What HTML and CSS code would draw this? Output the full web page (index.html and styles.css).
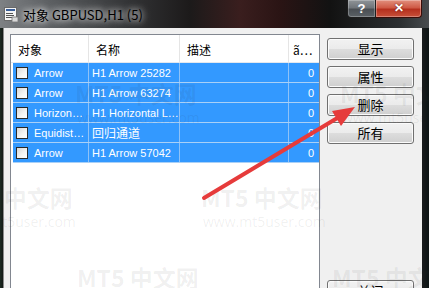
FILE: index.html
```html
<!DOCTYPE html>
<html>
<head>
    <link rel="stylesheet" href="styles.css">
</head>
<body>
    <div class="dlg-window">
        <div class="dlg-titlebar">
            <svg class="dlg-icon" width="15" height="15" viewBox="0 0 15 15">
                <rect x="0.5" y="0.5" width="12" height="13" fill="#f4f4f4" stroke="#6a6a6a"/>
                <rect x="2" y="2" width="9" height="2" fill="#3a5f9a"/>
                <rect x="2" y="6" width="7" height="1" fill="#555"/>
                <rect x="2" y="8" width="8" height="1" fill="#555"/>
                <rect x="2" y="10" width="6" height="1" fill="#555"/>
                <rect x="8" y="10" width="6" height="5" fill="#d8d8d8" stroke="#777" stroke-width="0.8"/>
            </svg>
            <span class="dlg-title">对象 GBPUSD,H1 (5)</span>
            <div class="dlg-caption-btns">
                <div class="dlg-help-btn">?</div>
                <div class="dlg-close-btn">✕</div>
            </div>
        </div>

        <div class="dlg-client">
            <div class="obj-list">
                <div class="obj-header">
                    <div class="obj-hcell">对象</div>
                    <div class="obj-hcell">名称</div>
                    <div class="obj-hcell">描述</div>
                    <div class="obj-hcell">ã…</div>
                </div>
                <div class="obj-row">
                    <div class="obj-cell"><span class="obj-check"></span>Arrow</div>
                    <div class="obj-cell">H1 Arrow 25282</div>
                    <div class="obj-cell"></div>
                    <div class="obj-cell obj-num">0</div>
                </div>
                <div class="obj-row">
                    <div class="obj-cell"><span class="obj-check"></span>Arrow</div>
                    <div class="obj-cell">H1 Arrow 63274</div>
                    <div class="obj-cell"></div>
                    <div class="obj-cell obj-num">0</div>
                </div>
                <div class="obj-row">
                    <div class="obj-cell"><span class="obj-check"></span>Horizon…</div>
                    <div class="obj-cell">H1 Horizontal L…</div>
                    <div class="obj-cell"></div>
                    <div class="obj-cell obj-num">0</div>
                </div>
                <div class="obj-row">
                    <div class="obj-cell"><span class="obj-check"></span>Equidist…</div>
                    <div class="obj-cell obj-cjk">回归通道</div>
                    <div class="obj-cell"></div>
                    <div class="obj-cell obj-num">0</div>
                </div>
                <div class="obj-row">
                    <div class="obj-cell"><span class="obj-check"></span>Arrow</div>
                    <div class="obj-cell">H1 Arrow 57042</div>
                    <div class="obj-cell"></div>
                    <div class="obj-cell obj-num">0</div>
                </div>
            </div>

            <div class="dlg-buttons">
                <button class="dlg-btn">显示</button>
                <button class="dlg-btn">属性</button>
                <button class="dlg-btn">删除</button>
                <button class="dlg-btn">所有</button>
                <button class="dlg-btn dlg-btn-close">关闭</button>
            </div>
        </div>

        <!-- watermarks -->
        <div class="wm wm-a"><div class="wm-big">MT5 中文网</div><div class="wm-small">www.mt5user.com</div></div>
        <div class="wm wm-b"><div class="wm-big">MT5 中文网</div><div class="wm-small">www.mt5user.com</div></div>
        <div class="wm wm-c"><div class="wm-big">MT5 中文网</div><div class="wm-small">www.mt5user.com</div></div>
        <div class="wm wm-d"><div class="wm-big">MT5 中文网</div><div class="wm-small">www.mt5user.com</div></div>
        <div class="wm wm-e"><div class="wm-big">MT5 中文网</div></div>
        <div class="wm wm-f"><div class="wm-big">MT5 中文网</div></div>

        <!-- red annotation arrow -->
        <svg class="annot-arrow" width="429" height="288" viewBox="0 0 429 288">
            <line x1="204" y1="198" x2="339" y2="117" stroke="#e63b3b" stroke-width="4" stroke-linecap="round"/>
            <polygon points="355,107 341,126 332,111" fill="#e63b3b"/>
        </svg>
    </div>
</body>
</html>
```

FILE: styles.css
```css
* {
    margin: 0;
    padding: 0;
    box-sizing: border-box;
}

body {
    width: 429px;
    height: 288px;
    overflow: hidden;
    background: #101412;
    font-family: "Liberation Sans", Arial, sans-serif;
}

.dlg-window {
    position: relative;
    width: 429px;
    height: 288px;
    overflow: hidden;
    background: linear-gradient(90deg, #1c2a22 0, #141a16 3px, #1a1c1e 422px, #0c1414 429px);
}

.dlg-titlebar {
    height: 28px;
    display: flex;
    align-items: center;
    padding-left: 4px;
    background: linear-gradient(90deg, #7e8184 0, #5c5f62 50px, #323335 130px, #1c1a1a 190px, #3a1e1e 240px, #2a1414 280px, #121212 330px, #2c2f31 400px, #474b4e 429px);
    position: relative;
}

.dlg-icon {
    margin-right: 4px;
    margin-top: 1px;
}

.dlg-title {
    font-family: "Noto Sans CJK SC", "Liberation Sans", sans-serif;
    font-size: 13px;
    color: #000;
    text-shadow: 0 0 6px #fff, 0 0 10px rgba(255, 255, 255, 0.8);
    margin-top: 1px;
}

.dlg-caption-btns {
    display: flex;
    align-self: flex-start;
    margin-left: auto;
    margin-right: 7px;
}

.dlg-help-btn {
    width: 29px;
    height: 18px;
    border: 1px solid #1e1e1e;
    border-top: none;
    border-radius: 0 0 0 4px;
    background: linear-gradient(#8f9498 0, #70757a 45%, #4a4f54 55%, #5b6166 100%);
    box-shadow: inset 0 0 0 1px rgba(255, 255, 255, 0.25);
    color: #fff;
    font-weight: bold;
    font-size: 13px;
    text-align: center;
    line-height: 17px;
}

.dlg-close-btn {
    width: 46px;
    height: 18px;
    border: 1px solid #3a0c08;
    border-left: none;
    border-top: none;
    border-radius: 0 0 4px 0;
    background: linear-gradient(#e2907e 0, #cf5a46 45%, #b5301e 55%, #c8503a 100%);
    box-shadow: inset 0 0 0 1px rgba(255, 255, 255, 0.3);
    color: #fff;
    font-weight: bold;
    font-size: 12px;
    text-align: center;
    line-height: 17px;
    text-shadow: 0 0 2px #5a1008;
}

.dlg-client {
    display: flex;
    gap: 7px;
    height: 280px;
    margin: 0 7px 0 3px;
    padding: 6px 8px 6px 6px;
    border-left: 1px solid #8c8c8c;
    background: #f0f0f0;
}

.obj-list {
    width: 310px;
    border: 1px solid #828790;
    background: #fff;
    font-size: 11px;
}

.obj-header {
    display: grid;
    grid-template-columns: 78px 91px 109px 30px;
    height: 28px;
    border-bottom: 1px solid #e4e8ee;
}

.obj-hcell {
    display: flex;
    align-items: center;
    padding: 2px 0 0 7px;
    border-right: 1px solid #e5e5e5;
    font-family: "Noto Sans CJK SC", sans-serif;
    font-size: 12px;
    color: #000;
    white-space: nowrap;
    overflow: hidden;
}

.obj-hcell:last-child {
    border-right: none;
    padding-left: 4px;
}

.obj-row {
    display: grid;
    grid-template-columns: 76px 91px 109px 30px;
    height: 20px;
    margin-left: 2px;
    background: #3399ff;
    border-bottom: 1px solid #a9d0f7;
    color: #fff;
}

.obj-cell {
    display: flex;
    align-items: center;
    padding-left: 3px;
    border-right: 1px solid #8fc2f7;
    white-space: nowrap;
    overflow: hidden;
}

.obj-cell:last-child {
    border-right: none;
}

.obj-check {
    width: 12px;
    height: 12px;
    margin-right: 6px;
    border: 1px solid #2a2a2a;
    background: linear-gradient(135deg, #d6d6d6 0, #f4f4f4 60%, #fff 100%);
    flex-shrink: 0;
}

.obj-cjk {
    font-family: "Noto Sans CJK SC", sans-serif;
    font-size: 12px;
}

.obj-num {
    justify-content: flex-end;
    padding-right: 5px;
}

.dlg-buttons {
    display: flex;
    flex-direction: column;
    gap: 6px;
    width: 88px;
    padding-top: 4px;
}

.dlg-btn {
    height: 22px;
    border: 1px solid #707070;
    border-radius: 3px;
    background: linear-gradient(#f2f2f2 0, #ebebeb 50%, #dddddd 50%, #cfcfcf 100%);
    box-shadow: inset 0 0 0 1px #fbfbfb;
    font-family: "Noto Sans CJK SC", sans-serif;
    font-size: 13px;
    color: #000;
    line-height: 18px;
}

.dlg-btn-close {
    margin-top: auto;
}

.wm {
    position: absolute;
    color: rgba(40, 40, 40, 0.075);
    pointer-events: none;
    white-space: nowrap;
}

.wm-big {
    font-family: "Noto Sans CJK SC", sans-serif;
    font-weight: bold;
    font-size: 23px;
    line-height: 26px;
}

.wm-small {
    font-family: "Open Sans", sans-serif;
    font-size: 14px;
    line-height: 16px;
    margin-top: 4px;
    padding-left: 2px;
}

.wm-a { left: 75px; top: 80px; }
.wm-b { left: -49px; top: 184px; }
.wm-c { left: 201px; top: 184px; }
.wm-d { left: 340px; top: 80px; }
.wm-e { left: 77px; top: 264px; }
.wm-f { left: 332px; top: 264px; }

.annot-arrow {
    position: absolute;
    left: 0;
    top: 0;
}
```
